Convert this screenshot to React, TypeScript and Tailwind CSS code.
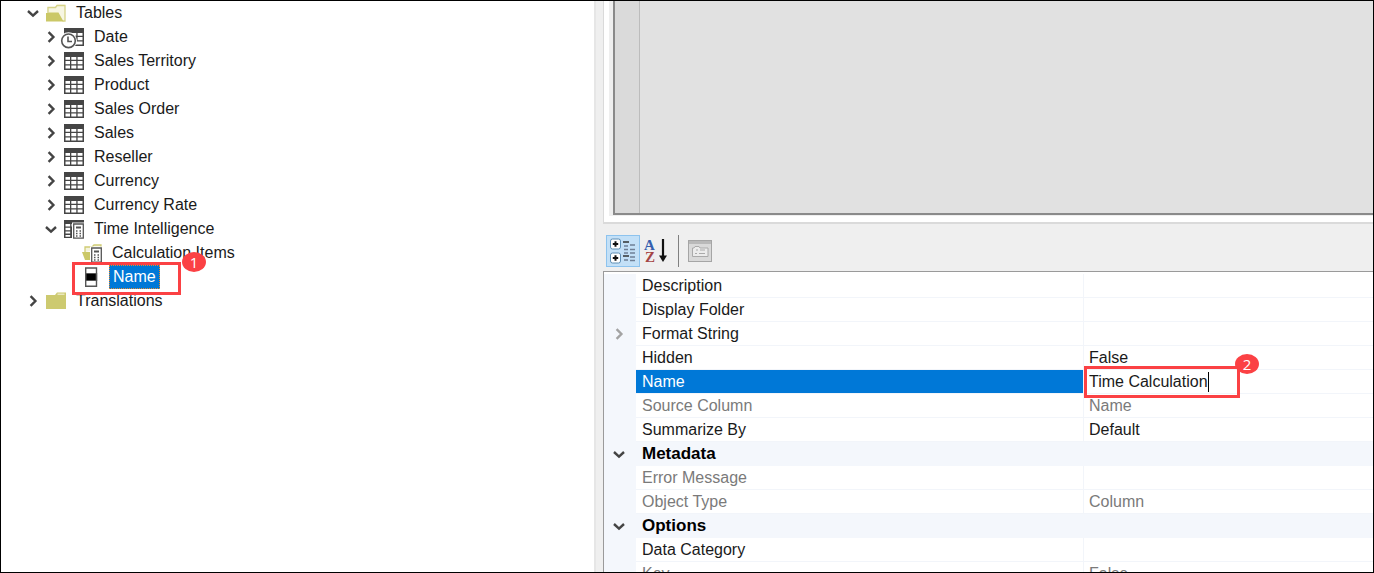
import { useState, type ReactNode } from 'react'

function Chevron({ open, className = 'text-[#444]' }: { open?: boolean; className?: string }) {
  return (
    <svg width="14" height="14" viewBox="0 0 14 14" fill="none" stroke="currentColor" strokeWidth="2.4" className={className} aria-hidden="true">
      <path d={open ? 'M2 5l5 4.6L12 5' : 'M4.6 2.2L9.4 7l-4.8 4.8'} />
    </svg>
  )
}

function OpenFolderIcon() {
  return (
    <svg width="20" height="20" viewBox="0 0 20 20" aria-hidden="true">
      <path d="M1 17V4h8l2-2.500h8V18z" fill="#f7f6e2" />
      <path d="M2 10V4.500h7.500l1.500-2h8V18h-2.500" fill="none" stroke="#d6d388" strokeWidth="1.300" />
      <path d="M0 10h2l1-.500h9.500L17.500 18.500H0z" fill="#cbc867" />
    </svg>
  )
}

function ClosedFolderIcon() {
  return (
    <svg width="20" height="20" viewBox="0 0 20 20" aria-hidden="true">
      <path d="M0 4h9l2-2.500h9V18H0z" fill="#cdca70" />
      <path d="M11.500 3.200h7" stroke="#f1f0d2" strokeWidth="1.200" />
    </svg>
  )
}

function TableIcon() {
  return (
    <svg width="20" height="20" viewBox="0 0 20 20" aria-hidden="true">
      <path d="M0 1h20v18H0z" fill="#454545" />
      <path
        d="M1.500 6h4.500v2.800H1.500zM7.300 6h5v2.800h-5zM13.600 6h4.900v2.800h-4.900zM1.500 10h4.500v3.200H1.500zM7.300 10h5v3.200h-5zM13.600 10h4.900v3.200h-4.900zM1.500 14.500h4.500v3H1.500zM7.300 14.500h5v3h-5zM13.600 14.500h4.900v3h-4.900z"
        fill="#fff"
      />
    </svg>
  )
}

function DateTableIcon() {
  return (
    <svg width="20" height="20" viewBox="0 0 20 20" overflow="visible" aria-hidden="true">
      <path d="M0 1h20v18H0z" fill="#454545" />
      <path d="M1.500 6h4.500v2.800H1.500zM7.300 6h5v2.800h-5zM13.600 6h4.900v2.800h-4.900zM13.600 10h4.900v3.200h-4.900zM12 14.500h6.500v3H12z" fill="#fff" />
      <circle cx="4.500" cy="13.800" r="8.500" fill="#fff" />
      <circle cx="4.500" cy="13.800" r="6.800" fill="#fff" stroke="#555" strokeWidth="1.600" />
      <path d="M4 9.500v5h4" fill="none" stroke="#555" strokeWidth="1.600" />
    </svg>
  )
}

function CalculatorShape() {
  return (
    <>
      <path d="M8 3.500h12V20H8z" fill="#fff" />
      <path d="M9.700 5h9.600v14.200H9.700z" fill="#fff" stroke="#555" strokeWidth="1.300" />
      <path d="M12 8.500h5" stroke="#555" strokeWidth="2" />
      <path d="M12 12h1.500M15.500 12H17M12 14.500h1.500M15.500 14.500H17M12 17h1.500M15.500 17H17" stroke="#555" strokeWidth="1.400" />
    </>
  )
}

function CalculationGroupIcon() {
  return (
    <svg width="20" height="20" viewBox="0 0 20 20" aria-hidden="true">
      <path d="M0 1h20v18H0z" fill="#454545" />
      <path d="M1.500 5h4.700v2.600H1.500zM7.500 5h11v2.600h-11zM1.500 8.800h4.700v2.400H1.500zM1.500 12.400h4.700v2.200H1.500zM1.500 15.900h4.700v1.800H1.500z" fill="#fff" />
      <CalculatorShape />
    </svg>
  )
}

function CalculationFolderIcon() {
  return (
    <svg width="20" height="20" viewBox="0 0 20 20" aria-hidden="true">
      <path d="M3 9V4h7l2-2h7v4" fill="#f4f3dc" stroke="#cfcc74" strokeWidth="1.300" />
      <path d="M0 9h9v8H3z" fill="#cbc867" />
      <CalculatorShape />
    </svg>
  )
}

function ColumnIcon() {
  return (
    <svg width="20" height="20" viewBox="0 0 20 20" aria-hidden="true">
      <path d="M3.700 1h10.800v18.300H3.700z" fill="#fff" stroke="#555" strokeWidth="1.400" />
      <path d="M3 6h12.200v8H3z" fill="#555" />
      <path d="M4.500 7h9.200v6H4.500z" fill="#000" />
    </svg>
  )
}

function CategorizedIcon() {
  return (
    <svg width="28" height="28" viewBox="0 0 28 28" aria-hidden="true">
      {[1, 15].map((y) => (
        <g key={y}>
          <rect x="1.500" y={y + 1} width="10" height="10" rx="2" fill="#fff" stroke="#5f8fb5" />
          <path d={`M3.800 ${y + 6}h5.400M6.500 ${y + 3.300}v5.400`} stroke="#111" strokeWidth="2" />
        </g>
      ))}
      <path d="M14 5h6M14 19h6" stroke="#333" strokeWidth="1.400" />
      <path d="M15 9h4M21 8h5M15 12.500h4M21 12.500h5M15 16h4M21 16h5M15 23h4M21 20h5M21 23.500h5" stroke="#6f7f96" strokeWidth="1.300" />
    </svg>
  )
}

function SortIcon() {
  return (
    <svg width="28" height="28" viewBox="0 0 28 28" aria-hidden="true">
      <text x="2" y="13" fontSize="15" fontWeight="700" fill="#355fae" className="font-['Liberation_Serif',serif]">A</text>
      <text x="3" y="25" fontSize="15" fontWeight="700" fill="#a54545" className="font-['Liberation_Serif',serif]">Z</text>
      <path d="M21 2v18" stroke="#111" strokeWidth="2.200" />
      <path d="M17 18.500h8l-4 6.500z" fill="#111" />
    </svg>
  )
}

function PropertyPageIcon() {
  return (
    <svg width="26" height="26" viewBox="0 0 26 26" aria-hidden="true">
      <rect x="1.500" y="2.500" width="23" height="21" fill="#d9d9d9" stroke="#a5a5a5" />
      <path d="M2 3h22v3H2z" fill="#b9b9b9" />
      <path d="M5.500 18.500V10H7l1-1.500h4L13 10h8v8.500z" fill="#ececec" stroke="#aaa" />
      <path d="M8 15.500h2M12 15.500h6M9 12h2M13 12h5" stroke="#aaa" />
    </svg>
  )
}

function Callout({ label, className }: { label: string; className: string }) {
  return (
    <span className={`absolute z-20 flex h-5 w-6 items-center justify-center rounded-[50%] bg-[#fb4144] font-['Open_Sans',sans-serif] text-[15px] leading-5 text-white ${className}`}>
      {label}
    </span>
  )
}

type Node = { name: string; icon: ReactNode; open?: boolean; leaf?: boolean; selected?: boolean; children?: Node[] }

const tree: Node[] = [
  {
    name: 'Tables',
    icon: <OpenFolderIcon />,
    open: true,
    children: [
      { name: 'Date', icon: <DateTableIcon /> },
      { name: 'Sales Territory', icon: <TableIcon /> },
      { name: 'Product', icon: <TableIcon /> },
      { name: 'Sales Order', icon: <TableIcon /> },
      { name: 'Sales', icon: <TableIcon /> },
      { name: 'Reseller', icon: <TableIcon /> },
      { name: 'Currency', icon: <TableIcon /> },
      { name: 'Currency Rate', icon: <TableIcon /> },
      {
        name: 'Time Intelligence',
        icon: <CalculationGroupIcon />,
        open: true,
        children: [
          { name: 'Calculation Items', icon: <CalculationFolderIcon />, leaf: true },
          { name: 'Name', icon: <ColumnIcon />, leaf: true, selected: true },
        ],
      },
    ],
  },
  { name: 'Translations', icon: <ClosedFolderIcon /> },
]

function TreeItem({ node }: { node: Node }) {
  return (
    <li>
      <div className="relative flex h-6 items-center">
        {node.leaf ? (
          <span className="w-[14px]" />
        ) : (
          <button type="button" aria-label={`${node.open ? 'Collapse' : 'Expand'} ${node.name}`}>
            <Chevron open={node.open} />
          </button>
        )}
        <span className="ml-[6px] mr-[7px]">{node.icon}</span>
        <span className={node.selected ? 'border border-dotted border-[#e58a2f] bg-[#0078d7] px-[3px] leading-[22px] text-white' : 'px-[3px]'}>
          {node.name}
        </span>
        {node.selected && (
          <>
            <span className="absolute -top-[3px] left-[10px] z-10 h-[33px] w-[109px] border-3 border-[#fb4144]" />
            <Callout label="1" className="-top-[13px] left-[120px]" />
          </>
        )}
      </div>
      {node.children && (
        <ul className="pl-[18px]">
          {node.children.map((child) => (
            <TreeItem key={child.name} node={child} />
          ))}
        </ul>
      )}
    </li>
  )
}

type Row = { name: string; value?: string; muted?: boolean; expandable?: boolean; group?: boolean; editing?: boolean }

const rows: Row[] = [
  { name: 'Description' },
  { name: 'Display Folder' },
  { name: 'Format String', expandable: true },
  { name: 'Hidden', value: 'False' },
  { name: 'Name', editing: true },
  { name: 'Source Column', value: 'Name', muted: true },
  { name: 'Summarize By', value: 'Default' },
  { name: 'Metadata', group: true },
  { name: 'Error Message', muted: true },
  { name: 'Object Type', value: 'Column', muted: true },
  { name: 'Options', group: true },
  { name: 'Data Category' },
  { name: 'Key', value: 'False', muted: true },
]

function NameEditor() {
  const [value, setValue] = useState('Time Calculation')
  return (
    <div className="relative flex h-[23px] items-center">
      <input
        aria-label="Name"
        value={value}
        onChange={(e) => setValue(e.target.value)}
        className="h-[22px] bg-transparent p-0 outline-none [field-sizing:content]"
      />
      <span className="h-5 w-px bg-black" />
      <span className="pointer-events-none absolute -left-[5px] -top-1 h-8 w-[156px] border-3 border-[#fb4144]" />
      <Callout label="2" className="-top-4 left-[146px]" />
    </div>
  )
}

function PropertyRow({ row }: { row: Row }) {
  if (row.group) {
    return (
      <tr className="h-6 bg-[#f4f7fc]">
        <td className="p-0 pl-2">
          <button type="button" aria-label={`Collapse ${row.name}`} className="block">
            <Chevron open />
          </button>
        </td>
        <th scope="rowgroup" colSpan={2} className="p-0 pl-[6px] text-left text-[17px] font-bold leading-6 text-black">
          {row.name}
        </th>
      </tr>
    )
  }
  return (
    <tr className={`h-6 ${row.muted ? 'text-[#7a7a7a]' : 'text-[#1a1a1a]'}`}>
      <td className="bg-[#f4f7fc] p-0 pl-2">
        {row.expandable && (
          <button type="button" aria-label={`Expand ${row.name}`} className="block">
            <Chevron className="text-[#a3a3a3]" />
          </button>
        )}
      </td>
      <th
        scope="row"
        className={`border-b border-r border-[#f2f5fa] p-0 pl-[6px] text-left font-normal leading-[23px] ${row.editing ? 'bg-[#0078d7] bg-clip-padding text-white' : ''}`}
      >
        {row.name}
      </th>
      <td className="border-b border-[#f2f5fa] p-0 pl-[5px] leading-[23px]">{row.editing ? <NameEditor /> : row.value}</td>
    </tr>
  )
}

export default function App() {
  return (
    <div className="flex h-screen overflow-hidden border border-black bg-white font-['Liberation_Sans',Arial,sans-serif] text-[16px] leading-6 text-[#1a1a1a]">
      <nav aria-label="Model explorer" className="w-[593px] shrink-0 pl-[25px]">
        <ul>
          {tree.map((node) => (
            <TreeItem key={node.name} node={node} />
          ))}
        </ul>
      </nav>

      <main className="flex min-w-0 flex-1 flex-col border-l-2 border-[#e6e6e6] bg-[#efefef] pl-[7px]">
        <section aria-label="Editor" className="h-[223px] shrink-0 border-b-2 border-l border-[#dadada] bg-white pb-[6px] pl-[5px]">
          <div className="h-full bg-[#efefef] pb-px pl-1">
            <div className="flex h-full border-b-2 border-l-2 border-[#8a8a8a] bg-[#e1e1e1]">
              <div className="w-[25px] border-r border-[#bcbcbc] bg-[#dadada]" />
            </div>
          </div>
        </section>

        <div role="toolbar" aria-label="Property view" className="flex h-[47px] shrink-0 items-center pb-px pt-[8px] pl-[3px]">
          <button type="button" aria-label="Categorized" className="flex h-8 w-[34px] items-center justify-center border border-[#8dc3ee] bg-[#c3e0f7]">
            <CategorizedIcon />
          </button>
          <button type="button" aria-label="Alphabetical" className="flex h-8 w-[34px] items-center pl-[2px]">
            <SortIcon />
          </button>
          <span className="ml-1 h-8 w-px bg-[#808080]" />
          <button type="button" aria-label="Property pages" disabled className="ml-2">
            <PropertyPageIcon />
          </button>
        </div>

        <section aria-label="Properties" className="min-h-0 flex-1 overflow-hidden border-l border-t border-[#9a9a9a] bg-white">
          <div className="border-t-2 border-white">
            <table className="w-full table-fixed border-separate border-spacing-0">
              <colgroup>
                <col className="w-8" />
                <col className="w-[448px]" />
                <col />
              </colgroup>
              <tbody>
                {rows.map((row) => (
                  <PropertyRow key={row.name} row={row} />
                ))}
              </tbody>
            </table>
          </div>
        </section>
      </main>
    </div>
  )
}
